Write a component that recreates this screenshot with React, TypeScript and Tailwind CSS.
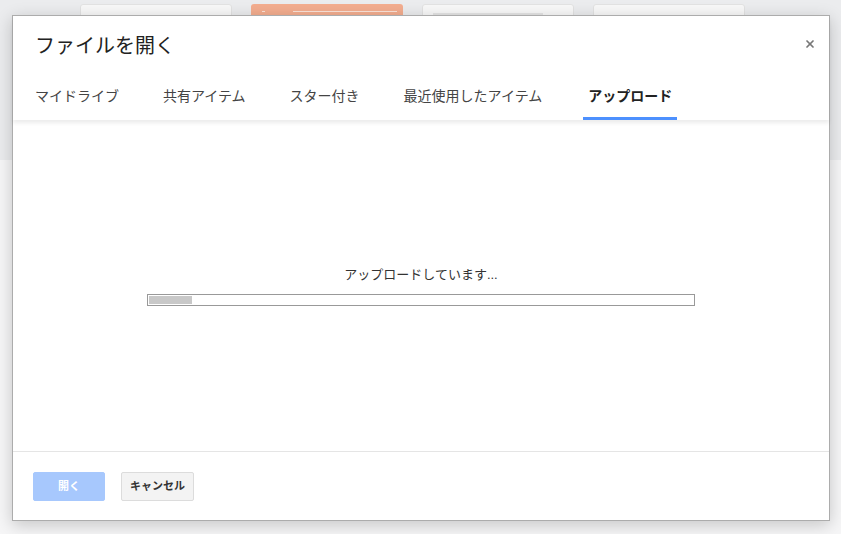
import { X } from "lucide-react";

const font = { fontFamily: "'Liberation Sans', 'Noto Sans CJK JP', sans-serif" };

const tabs = ["マイドライブ", "共有アイテム", "スター付き", "最近使用したアイテム", "アップロード"];

function Backdrop() {
  return (
    <div className="flex h-[534px] w-[841px] flex-col">
      {/* page behind the dialog */}
      <div className="flex h-[160px] gap-[19px] bg-[#ebecee] pl-[80px] pt-[4px]">
        <div className="h-[60px] w-[152px] rounded-[3px] border border-[#e2e2e2] bg-[#f8f8f8]" />
        <div className="relative h-[60px] w-[152px] rounded-[3px] bg-[#f3ad8f]">
          <div className="absolute left-[42px] top-[7px] h-[1px] w-[104px] bg-[#fbe3d8]" />
          <div className="absolute left-[11px] top-[7px] h-[1px] w-[3px] bg-[#fbe3d8]" />
        </div>
        <div className="relative h-[60px] w-[152px] rounded-[3px] border border-[#e2e2e2] bg-[#f8f8f8]">
          <div className="absolute left-[10px] top-[8px] h-[3px] w-[110px] bg-[#e4e4e4]" />
        </div>
        <div className="h-[60px] w-[152px] rounded-[3px] border border-[#e2e2e2] bg-[#f8f8f8]" />
      </div>
      <div className="flex-1 bg-[#f6f6f7]" />
    </div>
  );
}

export default function App() {
  return (
    <div className="relative h-[534px] w-[841px] overflow-hidden" style={font}>
      <Backdrop />

      {/* dialog */}
      <div className="absolute left-[12px] top-[15px] flex h-[506px] w-[818px] flex-col border border-[#acacac] bg-white shadow-[0_4px_16px_rgba(0,0,0,0.2)]">
        <div className="relative z-10 flex flex-col px-[22px] pt-[16px] shadow-[0_3px_4px_rgba(0,0,0,0.08)]">
          <div className="flex items-center justify-between">
            <h1 className="text-[20px] leading-[28px] font-normal text-[#222]">ファイルを開く</h1>
            <X className="mr-[-9px] mt-[-4px] h-[12px] w-[12px] text-[#777]" strokeWidth={3.5} />
          </div>
          <div className="ml-[-5px] mt-[26px] flex gap-[34px]">
            {tabs.map((t, i) => (
              <div
                key={t}
                className={
                  i === tabs.length - 1
                    ? "ml-[2px] border-b-[3px] border-[#4d90fe] px-[5px] pb-[11px] text-[14px] leading-[20px] font-bold text-[#222]"
                    : "border-b-[3px] border-transparent px-[5px] pb-[11px] text-[14px] leading-[20px] text-[#444]"
                }
              >
                {t}
              </div>
            ))}
          </div>
        </div>

        <div className="flex flex-1 flex-col items-center justify-center border-b border-[#e5e5e5]">
          <div className="text-[13px] leading-[20px] text-[#333]">アップロードしています...</div>
          <div className="mt-[9px] h-[12px] w-[548px] border border-[#999] bg-white p-[1px]">
            <div className="h-full w-[43px] bg-[#c8c8c8]" />
          </div>
        </div>

        <div className="flex h-[68px] gap-[16px] px-[20px] pt-[20px]">
          <button className="h-[29px] w-[72px] rounded-[2px] border border-[#a7c8fd] bg-[#a7c8fd] text-[11px] font-bold text-white">
            開く
          </button>
          <button className="h-[29px] min-w-[72px] rounded-[2px] border border-[#dcdcdc] bg-[#f3f3f3] px-[8px] text-[11px] font-bold text-[#333]">
            キャンセル
          </button>
        </div>
      </div>
    </div>
  );
}
